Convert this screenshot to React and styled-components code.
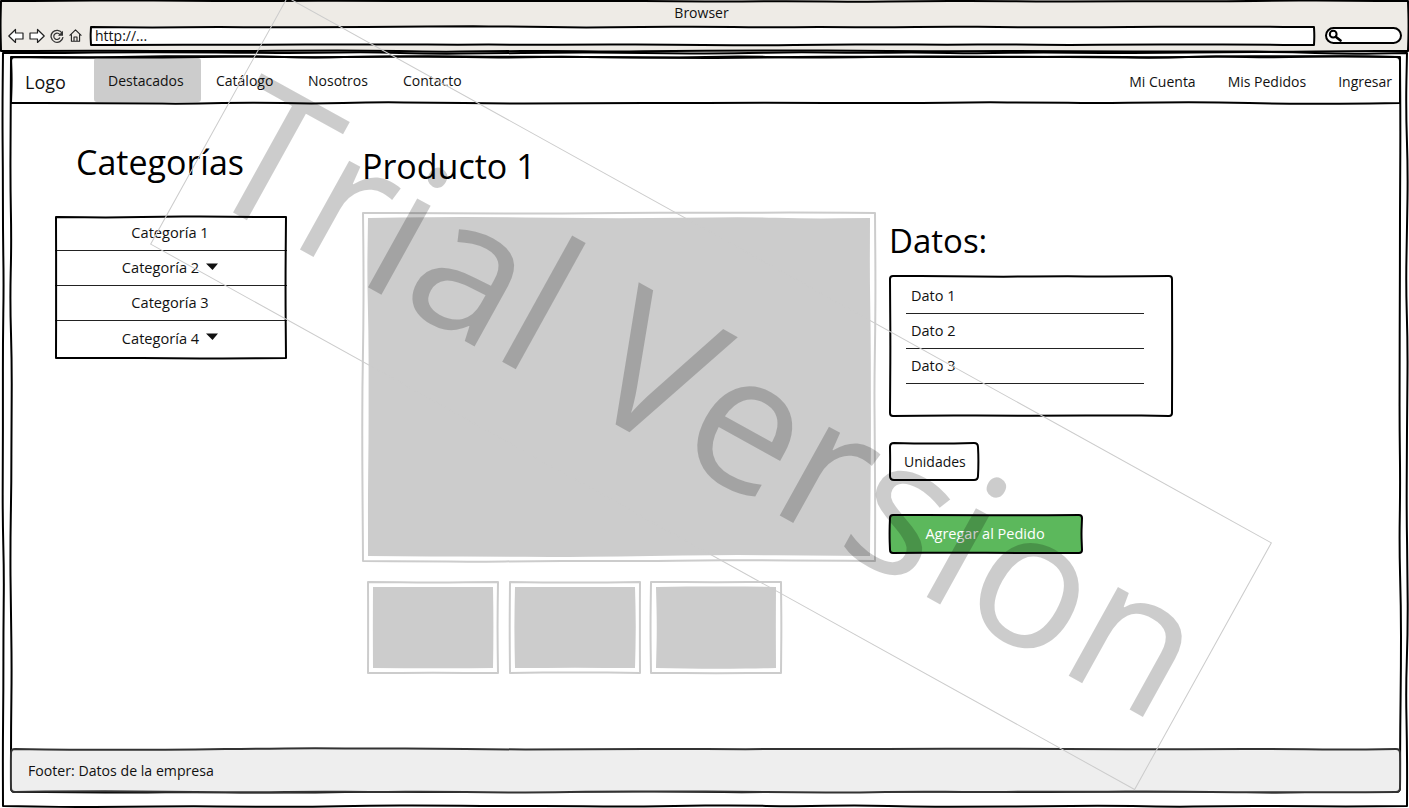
import React, { useLayoutEffect, useRef, useState } from 'react';
import styled, { createGlobalStyle } from 'styled-components';

const FONT = '"Open Sans", "Noto Sans", sans-serif';

const GlobalStyle = createGlobalStyle`
    html, body {
        margin: 0;
        padding: 0;
        background: #fff;
        color: #111;
        font-family: ${FONT};
    }
`;

// small seeded random, so the wobble is the same on every render
const seeded = (seed) => {
    let s = seed * 9301 + 49297;
    return () => {
        s = (s * 9301 + 49297) % 233280;
        return s / 233280 - 0.5;
    };
};

const wobbleEdge = (x0, y0, x1, y1, rand, amp) => {
    const len = Math.hypot(x1 - x0, y1 - y0);
    const steps = Math.max(2, Math.round(len / 60));
    const nx = -(y1 - y0) / len;
    const ny = (x1 - x0) / len;
    const pts = [];
    for (let i = 0; i <= steps; i++) {
        const t = i / steps;
        const off = i === 0 || i === steps ? 0 : rand() * amp * 2;
        pts.push([x0 + (x1 - x0) * t + nx * off, y0 + (y1 - y0) * t + ny * off]);
    }
    let d = '';
    for (let i = 1; i < pts.length; i++) {
        const mx = (pts[i - 1][0] + pts[i][0]) / 2;
        const my = (pts[i - 1][1] + pts[i][1]) / 2;
        d += ` Q${pts[i - 1][0].toFixed(1)} ${pts[i - 1][1].toFixed(1)} ${mx.toFixed(1)} ${my.toFixed(1)}`;
    }
    const last = pts[pts.length - 1];
    return d + ` L${last[0].toFixed(1)} ${last[1].toFixed(1)}`;
};

const boxPath = (w, h, seed, amp, inset, r) => {
    const rand = seeded(seed);
    const a = inset;
    const e = w - inset;
    const b = h - inset;
    return `M${a + r} ${a}` +
        wobbleEdge(a + r, a, e - r, a, rand, amp) + ` Q${e} ${a} ${e} ${a + r}` +
        wobbleEdge(e, a + r, e, b - r, rand, amp) + ` Q${e} ${b} ${e - r} ${b}` +
        wobbleEdge(e - r, b, a + r, b, rand, amp) + ` Q${a} ${b} ${a} ${b - r}` +
        wobbleEdge(a, b - r, a, a + r, rand, amp) + ` Q${a} ${a} ${a + r} ${a} Z`;
};

const SketchSvg = styled.svg`
    position: absolute;
    inset: 0;
    width: 100%;
    height: 100%;
    overflow: visible;
    pointer-events: none;
`;

// hand drawn border, measures its parent and draws over it
const Sketch = ({ seed = 1, amp = 0.8, stroke = '#000', width = 2, fill = 'none', inset = 1, radius = 0 }) => {
    const ref = useRef(null);
    const [size, setSize] = useState(null);
    useLayoutEffect(() => {
        const parent = ref.current.parentElement;
        setSize({ w: parent.offsetWidth, h: parent.offsetHeight });
    }, []);
    return (
        <SketchSvg ref={ref}>
            {size && (
                <path
                    d={boxPath(size.w, size.h, seed, amp, inset, radius)}
                    fill={fill}
                    stroke={stroke}
                    strokeWidth={width}
                    strokeLinejoin="round"
                />
            )}
        </SketchSvg>
    );
};

const Caret = () => (
    <CaretIcon viewBox="0 0 12 7">
        <path d="M0 0.5 L12 0.5 L6.5 7 Z" fill="#111" />
    </CaretIcon>
);

const Arrow = ({ flip }) => (
    <ToolIcon width="16" height="16" viewBox="0 0 16 16" $flip={flip}>
        <path d="M0.8 8 L7.5 1.5 L7.5 5 L15 5 L15 11 L7.5 11 L7.5 14.5 Z" fill="#fff" stroke="#222" strokeWidth="1.2" strokeLinejoin="round" />
    </ToolIcon>
);

const Reload = () => (
    <ToolIcon width="14" height="14" viewBox="0 0 14 14">
        <path d="M12.2 4.2 A6 6 0 1 0 13 8.2" fill="none" stroke="#333" strokeWidth="1.3" />
        <path d="M10 6.2 A3.2 3.2 0 1 0 9.9 8.6" fill="none" stroke="#333" strokeWidth="1.2" />
        <path d="M13 1.8 L13 6.8 L8 6.8 Z" fill="#333" />
    </ToolIcon>
);

const Home = () => (
    <ToolIcon width="13" height="13" viewBox="0 0 13 13">
        <path d="M0.6 6.6 L6.5 0.8 L12.4 6.6 M2.4 5.4 L2.4 12.3 L10.6 12.3 L10.6 5.4 M5 12.3 L5 8 L8 8 L8 12.3" fill="none" stroke="#222" strokeWidth="1.1" strokeLinejoin="round" />
    </ToolIcon>
);

const SearchGlass = () => (
    <svg width="14" height="13" viewBox="0 0 14 13">
        <circle cx="5.2" cy="5.2" r="3.4" fill="none" stroke="#000" strokeWidth="2" />
        <path d="M8 8 L12.5 11.5" stroke="#000" strokeWidth="2.6" strokeLinecap="round" />
    </svg>
);

const Picture = ({ seed }) => (
    <>
        <Sketch seed={seed} stroke="#cccccc" amp={0.8} />
        <PictureFill>
            <Sketch seed={seed + 3} stroke="none" fill="#cccccc" amp={1} inset={0} />
        </PictureFill>
    </>
);

const categories = [
    { label: 'Categoría 1' },
    { label: 'Categoría 2', caret: true },
    { label: 'Categoría 3' },
    { label: 'Categoría 4', caret: true },
];

const App = () => {
    return (
        <Root>
            <GlobalStyle />
            <BrowserBar>
                <Sketch seed={2} amp={0.8} />
                <BrowserTitle>Browser</BrowserTitle>
                <Toolbar>
                    <ToolIcons>
                        <Arrow />
                        <Arrow flip />
                        <Reload />
                        <Home />
                    </ToolIcons>
                    <UrlField>
                        <Sketch seed={5} amp={0.7} />
                        http://...
                    </UrlField>
                    <SearchField>
                        <SearchGlass />
                    </SearchField>
                </Toolbar>
            </BrowserBar>

            <PageFrame>
                <Sketch seed={7} amp={1.2} />
                <Page>
                    <Sketch seed={11} amp={1.1} radius={4} />
                    <NavBar>
                        <Sketch seed={13} amp={0.9} />
                        <Logo>Logo</Logo>
                        <NavLinks>
                            <NavLink $active $width={107}>Destacados</NavLink>
                            <NavLink $width={92}>Catálogo</NavLink>
                            <NavLink $width={95}>Nosotros</NavLink>
                            <NavLink $width={90}>Contacto</NavLink>
                        </NavLinks>
                        <NavRight>
                            <span>Mi Cuenta</span>
                            <span>Mis Pedidos</span>
                            <span>Ingresar</span>
                        </NavRight>
                    </NavBar>

                    <Content>
                        <Sidebar>
                            <SideTitle>Categorías</SideTitle>
                            <CategoryList>
                                <Sketch seed={17} amp={0.8} />
                                {categories.map((c) => (
                                    <CategoryRow key={c.label}>
                                        {c.label}
                                        {c.caret && <Caret />}
                                    </CategoryRow>
                                ))}
                            </CategoryList>
                        </Sidebar>

                        <ProductColumn>
                            <ProductTitle>Producto 1</ProductTitle>
                            <MainPicture>
                                <Picture seed={19} />
                            </MainPicture>
                            <Thumbs>
                                <Thumb><Picture seed={23} /></Thumb>
                                <Thumb><Picture seed={29} /></Thumb>
                                <Thumb><Picture seed={31} /></Thumb>
                            </Thumbs>
                        </ProductColumn>

                        <DataColumn>
                            <DataTitle>Datos:</DataTitle>
                            <DataBox>
                                <Sketch seed={37} amp={0.8} radius={3} />
                                <DataRow>Dato 1</DataRow>
                                <DataRow>Dato 2</DataRow>
                                <DataRow>Dato 3</DataRow>
                            </DataBox>
                            <UnitsField>
                                <Sketch seed={41} amp={0.8} radius={4} />
                                Unidades
                            </UnitsField>
                            <AddButton>
                                <Sketch seed={43} amp={0.7} fill="#5cb85c" radius={3} />
                                <AddLabel>Agregar al Pedido</AddLabel>
                            </AddButton>
                        </DataColumn>
                    </Content>

                    <Footer>
                        <Sketch seed={47} amp={0.9} stroke="#333" fill="#eeeeee" radius={4} />
                        <FooterText>Footer: Datos de la empresa</FooterText>
                    </Footer>
                </Page>
            </PageFrame>

            <Watermark>
                <WatermarkText>Trial Version</WatermarkText>
            </Watermark>
        </Root>
    );
};

export default App;

const Root = styled.div`
    position: relative;
    width: 1409px;
    height: 808px;
    overflow: hidden;
    display: flex;
    flex-direction: column;
    background: #fff;
`;

const BrowserBar = styled.header`
    position: relative;
    height: 52px;
    flex: none;
    background: #eeebe6;
    display: flex;
    flex-direction: column;
`;

const BrowserTitle = styled.div`
    height: 25px;
    line-height: 26px;
    text-align: center;
    font-size: 14px;
    padding-right: 6px;
`;

const Toolbar = styled.div`
    display: flex;
    align-items: center;
    height: 21px;
    padding: 0 7px 0 8px;
`;

const ToolIcons = styled.div`
    display: flex;
    align-items: center;
    gap: 5px;
    width: 82px;
    flex: none;
`;

const ToolIcon = styled.svg`
    flex: none;
    transform: ${(props) => (props.$flip ? 'scaleX(-1)' : 'none')};
`;

const UrlField = styled.div`
    position: relative;
    flex: none;
    width: 1225px;
    height: 20px;
    background: #fff;
    font-size: 14px;
    line-height: 20px;
    padding-left: 5px;
    box-sizing: border-box;
    margin-right: 10px;
`;

const SearchField = styled.div`
    flex: none;
    width: 77px;
    height: 17px;
    box-sizing: border-box;
    background: #fff;
    border: 2px solid #000;
    border-radius: 9px;
    padding-left: 1px;
    display: flex;
    align-items: center;
`;

const PageFrame = styled.div`
    position: relative;
    flex: 1;
    display: flex;
    margin: 0 1px 1px 2px;
    padding: 4px 7px 14px 8px;
    min-height: 0;
`;

const Page = styled.div`
    position: relative;
    flex: 1;
    display: flex;
    flex-direction: column;
`;

const NavBar = styled.nav`
    position: relative;
    height: 48px;
    flex: none;
    display: flex;
    align-items: center;
    padding: 0 9px 0 15px;
    font-size: 14px;
`;

const Logo = styled.div`
    font-size: 18px;
    width: 69px;
    flex: none;
    line-height: 1;
    margin-top: 3px;
`;

const NavLinks = styled.div`
    display: flex;
    height: 44px;
    flex: none;
`;

const NavLink = styled.div`
    width: ${(props) => props.$width}px;
    box-sizing: border-box;
    padding-left: ${(props) => (props.$active ? 14 : 15)}px;
    line-height: 46px;
    background: ${(props) => (props.$active ? '#cccccc' : 'transparent')};
    border-radius: 3px;
`;

const NavRight = styled.div`
    margin-left: auto;
    display: flex;
    gap: 32px;
    margin-top: 3px;
`;

const Content = styled.main`
    flex: 1;
    display: flex;
    padding-left: 45px;
    min-height: 0;
`;

const Sidebar = styled.aside`
    width: 307px;
    flex: none;
`;

const SideTitle = styled.h2`
    margin: 0 0 0 21px;
    padding-top: 35px;
    height: 46px;
    box-sizing: content-box;
    font-size: 34px;
    font-weight: 400;
    line-height: 46px;
    margin-bottom: 31px;
    color: #000;
`;

const CategoryList = styled.div`
    position: relative;
    width: 232px;
    height: 143px;
`;

const CategoryRow = styled.div`
    height: 35px;
    box-sizing: border-box;
    padding: 0 2px 2px 0;
    display: flex;
    align-items: center;
    justify-content: center;
    gap: 7px;
    font-size: 14.6px;
    border-bottom: 1px solid #222;

    &:last-of-type {
        border-bottom: 0;
    }
`;

const CaretIcon = styled.svg`
    width: 12px;
    height: 7px;
    flex: none;
    margin-bottom: 2px;
`;

const ProductColumn = styled.section`
    width: 527px;
    flex: none;
`;

const ProductTitle = styled.h1`
    margin: 0;
    padding-top: 39px;
    height: 46px;
    box-sizing: content-box;
    font-size: 34px;
    font-weight: 400;
    line-height: 46px;
    margin-bottom: 23px;
    color: #000;
`;

const MainPicture = styled.div`
    position: relative;
    width: 514px;
    height: 350px;
`;

const PictureFill = styled.div`
    position: absolute;
    inset: 6px;
`;

const Thumbs = styled.div`
    display: flex;
    gap: 10px;
    margin: 19px 0 0 5px;
`;

const Thumb = styled.div`
    position: relative;
    width: 131.5px;
    height: 93px;
`;

const DataColumn = styled.section`
    flex: 1;
`;

const DataTitle = styled.h2`
    margin: 0;
    padding-top: 114px;
    height: 46px;
    box-sizing: content-box;
    font-size: 33px;
    font-weight: 400;
    line-height: 46px;
    margin-bottom: 11px;
    color: #000;
`;

const DataBox = styled.div`
    position: relative;
    width: 284px;
    height: 142px;
    box-sizing: border-box;
    padding: 4px 0 0 17px;
`;

const DataRow = styled.div`
    width: 238px;
    height: 35px;
    box-sizing: border-box;
    padding: 5px 0 0 5px;
    font-size: 14.5px;
    line-height: 24px;
    border-bottom: 1px solid #222;
`;

const UnitsField = styled.div`
    position: relative;
    width: 90px;
    height: 39px;
    margin-top: 25px;
    font-size: 14px;
    line-height: 39px;
    padding-left: 15px;
    box-sizing: border-box;
`;

const AddButton = styled.div`
    position: relative;
    width: 194px;
    height: 40px;
    margin-top: 33px;
`;

const AddLabel = styled.div`
    position: relative;
    text-align: center;
    line-height: 40px;
    font-size: 14.5px;
    padding-right: 2px;
    color: #fff;
`;

const Footer = styled.footer`
    position: relative;
    height: 45px;
    flex: none;
    display: flex;
    align-items: center;
    padding-left: 18px;
`;

const FooterText = styled.div`
    font-size: 14.15px;
    position: relative;
`;

const Watermark = styled.div`
    position: absolute;
    left: 148px;
    top: 252px;
    width: 1126px;
    height: 283px;
    box-sizing: border-box;
    border: 1px solid #cccccc;
    transform: rotate(29deg);
    display: flex;
    align-items: center;
    justify-content: center;
    pointer-events: none;
`;

const WatermarkText = styled.div`
    font-size: 190px;
    font-weight: 400;
    white-space: nowrap;
    line-height: 1;
    color: rgba(0, 0, 0, 0.2);
`;
